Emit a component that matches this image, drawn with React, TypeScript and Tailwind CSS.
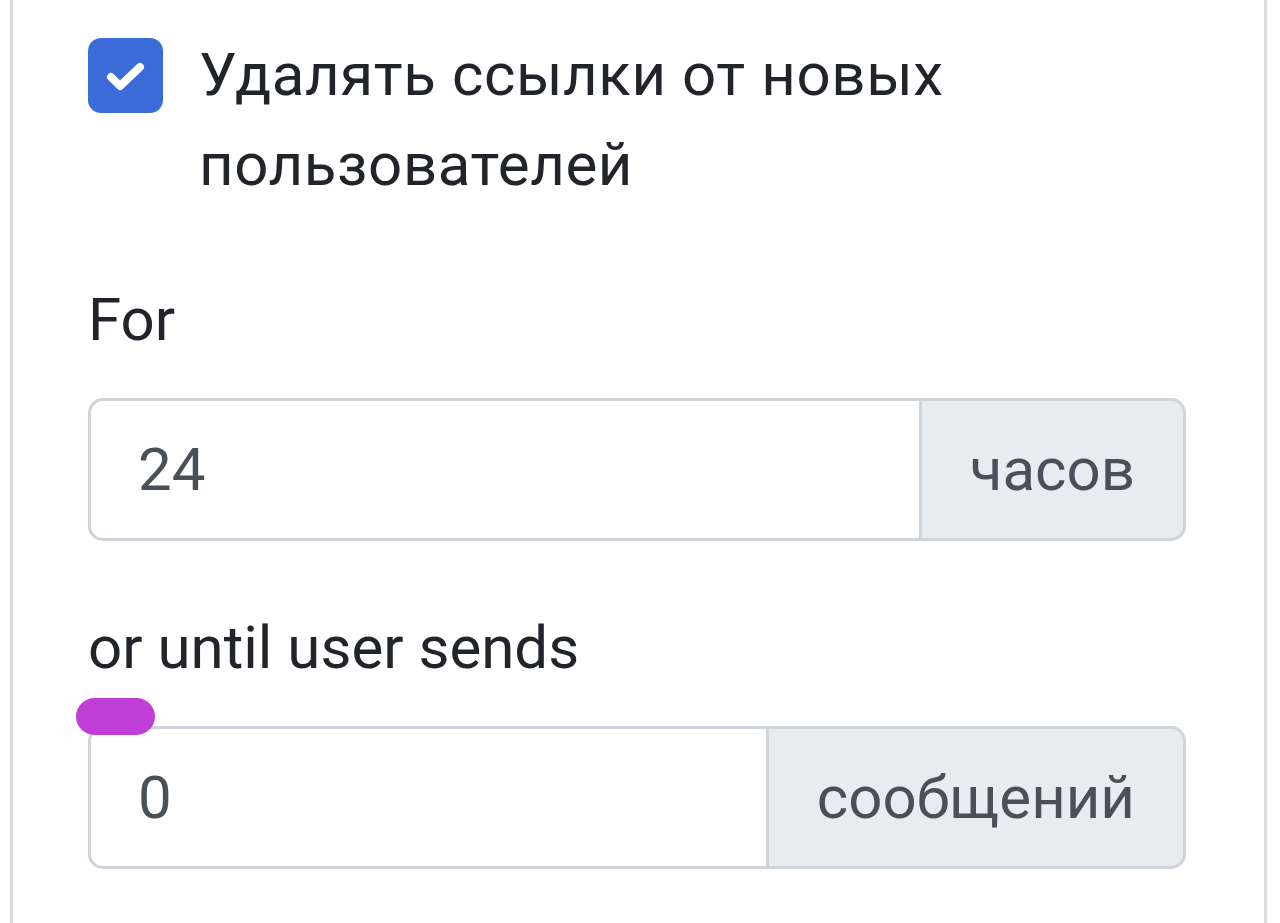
export default function App() {
  return (
    <div className="flex min-h-[923px] w-[1280px] bg-white font-['Roboto','Liberation_Sans',sans-serif] text-[#212529]">
      <div className="ml-[10px] w-[3px] bg-[#dcdcdc]" />
      <div className="w-[1251px] pl-[75px] pt-[30px] pr-[78px]">
        <label className="flex items-start gap-[36px] text-[60px] leading-[90px]">
          <span className="mt-[8px] flex h-[75px] w-[75px] shrink-0 items-center justify-center rounded-[13px] bg-[#3b6bd9]">
            <svg width="40" height="32" viewBox="0 0 40 32">
              <polyline
                points="5,17 14,26 34,7"
                fill="none"
                stroke="white"
                strokeWidth="8"
                strokeLinecap="round"
                strokeLinejoin="round"
              />
            </svg>
          </span>
          <span className="max-w-[900px] tracking-[0.6px]">Удалять ссылки от новых пользователей</span>
        </label>

        <div className="mt-[65px] text-[60px] leading-[90px]">For</div>
        <div className="mt-[33px] flex h-[143px] w-[1098px]">
          <div className="flex flex-1 items-center rounded-l-[15px] border-[3px] border-[#ced4da] bg-white pl-[47px] text-[60px] text-[#495057]">
            24
          </div>
          <div className="flex items-center rounded-r-[15px] border-[3px] border-l-0 border-[#ced4da] bg-[#e9ecef] px-[48px] text-[60px] text-[#495057]">
            часов
          </div>
        </div>

        <div className="mt-[62px] text-[60px] leading-[90px]">or until user sends</div>
        <div className="relative mt-[33px] flex h-[143px] w-[1098px]">
          <span className="absolute left-[-12px] top-[-28px] h-[37px] w-[79px] rounded-full bg-[#c03dd6]" />
          <div className="flex flex-1 items-center rounded-l-[15px] border-[3px] border-[#ced4da] bg-white pl-[47px] text-[60px] text-[#495057]">
            0
          </div>
          <div className="flex items-center rounded-r-[15px] border-[3px] border-l-0 border-[#ced4da] bg-[#e9ecef] px-[48px] text-[60px] text-[#495057]">
            сообщений
          </div>
        </div>
      </div>
      <div className="w-[3px] bg-[#dcdcdc]" />
    </div>
  );
}
